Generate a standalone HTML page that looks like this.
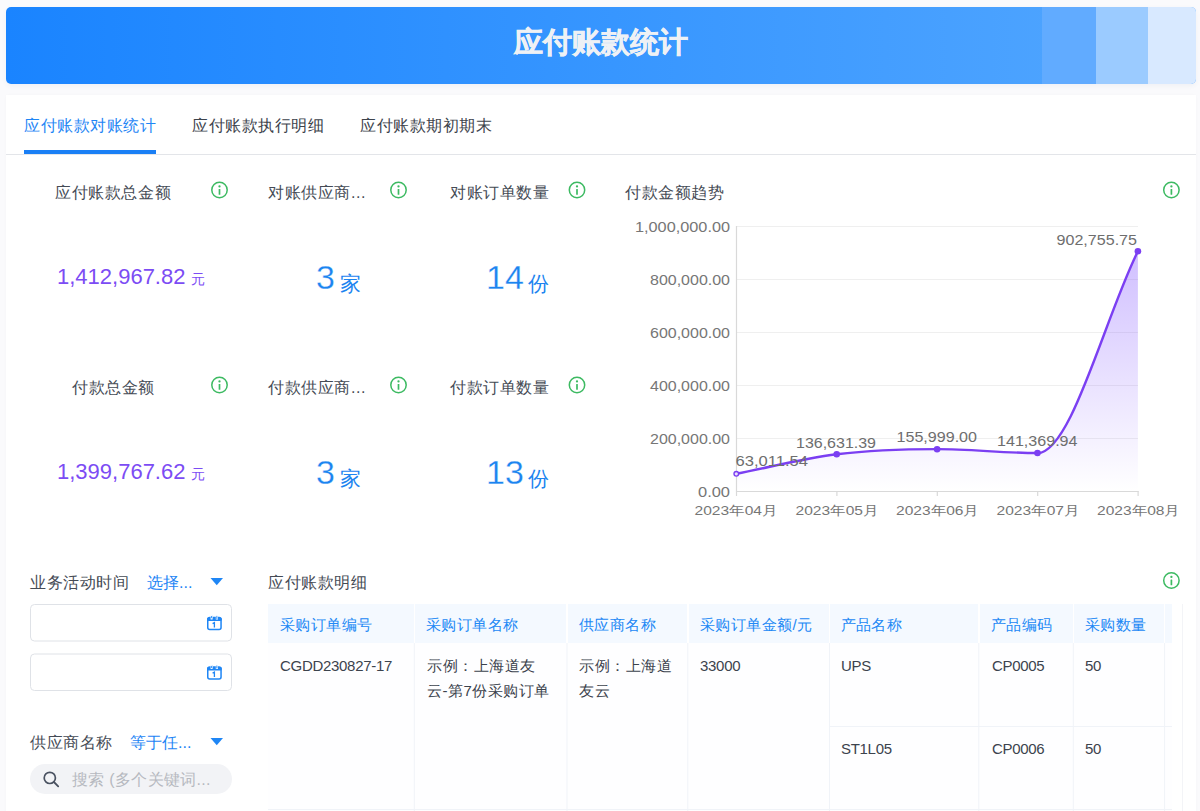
<!DOCTYPE html>
<html><head><meta charset="utf-8">
<style>
*{margin:0;padding:0;box-sizing:border-box}
html,body{width:1200px;height:811px;overflow:hidden;background:#fafafc;font-family:"Liberation Sans",sans-serif;}
.abs{position:absolute;white-space:nowrap}
#banner{position:absolute;left:6px;top:7px;width:1190px;height:76.5px;border-radius:5px;overflow:hidden;
 background:linear-gradient(90deg,#1a84ff 0%,#4ca3ff 88%);box-shadow:0 2px 5px rgba(60,80,120,0.06)}
#banner .b1{position:absolute;left:1036px;top:0;width:54px;height:100%;background:#61abff}
#banner .b2{position:absolute;left:1090px;top:0;width:52px;height:100%;background:#9bcbff}
#banner .b3{position:absolute;left:1142px;top:0;width:48px;height:100%;background:#d8e9ff}
#banner .t{position:absolute;left:0;width:1190px;top:16px;text-align:center;color:#eef1f5;font-size:29px;-webkit-text-stroke:0.5px #eef1f5;font-weight:bold;letter-spacing:0px}
#card{position:absolute;left:6px;top:95px;width:1190px;height:730px;background:#fff;box-shadow:0 0 3px rgba(0,0,0,0.025)}
.tab{position:absolute;top:116px;font-size:16px;letter-spacing:0.5px;color:#3d434c}
.lbl{font-size:16px;letter-spacing:0.6px;color:#454b55}
.info{position:absolute;width:17px;height:17px}
.pv{color:#7c4cf4}
.pn{}
.bv{color:#1c84f0}
.bn{-webkit-text-stroke:0.3px #fff}
.blue{color:#1f86f5}
.th{position:absolute;top:604.4px;height:38.2px;background:#f4f9ff}
.thx{position:absolute;top:616px;font-size:15px;letter-spacing:0.4px;color:#2288f5}
.td{position:absolute;font-size:15px;color:#3c434d;line-height:24px}
.tl{letter-spacing:-0.3px}
.tc{letter-spacing:0.5px;line-height:24.5px}
</style></head><body>
<div id="banner"><div class="b1"></div><div class="b2"></div><div class="b3"></div><div class="t">应付账款统计</div></div>
<div id="card"></div>
<!-- tabs -->
<div class="abs tab" style="left:24px;color:#1f86f5">应付账款对账统计</div>
<div class="abs tab" style="left:192px">应付账款执行明细</div>
<div class="abs tab" style="left:360px">应付账款期初期末</div>
<div class="abs" style="left:24px;top:150px;width:132px;height:3.5px;background:#1a7ff5"></div>
<div class="abs" style="left:6px;top:153.5px;width:1190px;height:1px;background:#e3e5e9"></div>

<!-- stats labels -->
<div class="abs lbl" style="left:55px;top:182.5px">应付账款总金额</div>
<div class="abs lbl" style="left:268px;top:182.5px">对账供应商...</div>
<div class="abs lbl" style="left:450px;top:182.5px">对账订单数量</div>
<div class="abs lbl" style="left:625px;top:182.5px">付款金额趋势</div>
<div class="abs lbl" style="left:72px;top:377.5px">付款总金额</div>
<div class="abs lbl" style="left:268px;top:377.5px">付款供应商...</div>
<div class="abs lbl" style="left:450px;top:377.5px">付款订单数量</div>

<svg class="abs" style="left:0;top:0" width="1200" height="811">
 <defs>
  <g id="ic"><circle cx="0" cy="0" r="7.7" fill="none" stroke="#3dba62" stroke-width="1.5"/><rect x="-0.85" y="-0.9" width="1.7" height="5.6" rx="0.5" fill="#3dba62"/><circle cx="0" cy="-3.6" r="1.15" fill="#3dba62"/></g>
 </defs>
 <use href="#ic" x="219.5" y="190"/>
 <use href="#ic" x="398.5" y="190"/>
 <use href="#ic" x="577" y="190"/>
 <use href="#ic" x="1171.4" y="190"/>
 <use href="#ic" x="219.5" y="385"/>
 <use href="#ic" x="398.5" y="385"/>
 <use href="#ic" x="577" y="385"/>
 <use href="#ic" x="1171.4" y="580.5"/>
</svg>

<!-- values -->
<div class="abs pv pn" style="left:57px;top:264px;font-size:22px">1,412,967.82</div><div class="abs pv" style="left:191px;top:271px;font-size:14px">元</div>
<div class="abs bv bn" style="left:316px;top:258px;font-size:34px">3</div><div class="abs bv" style="left:340px;top:270px;font-size:21px">家</div>
<div class="abs bv bn" style="left:486px;top:258px;font-size:34px">14</div><div class="abs bv" style="left:528px;top:270px;font-size:21px">份</div>
<div class="abs pv pn" style="left:57px;top:459px;font-size:22px">1,399,767.62</div><div class="abs pv" style="left:191px;top:466px;font-size:14px">元</div>
<div class="abs bv bn" style="left:316px;top:453px;font-size:34px">3</div><div class="abs bv" style="left:340px;top:465px;font-size:21px">家</div>
<div class="abs bv bn" style="left:486px;top:453px;font-size:34px">13</div><div class="abs bv" style="left:528px;top:465px;font-size:21px">份</div>

<!-- chart -->
<svg class="abs" style="left:0;top:0" width="1200" height="811" font-family="Liberation Sans, sans-serif">
 <defs>
  <linearGradient id="ag" x1="0" y1="0" x2="0" y2="1">
   <stop offset="0" stop-color="#7c4dff" stop-opacity="0.36"/>
   <stop offset="1" stop-color="#7c4dff" stop-opacity="0.0"/>
  </linearGradient>
 </defs>
 <g stroke="#efefef" stroke-width="1">
  <line x1="736" y1="226.5" x2="1138" y2="226.5"/>
  <line x1="736" y1="279.5" x2="1138" y2="279.5"/>
  <line x1="736" y1="332.5" x2="1138" y2="332.5"/>
  <line x1="736" y1="385.5" x2="1138" y2="385.5"/>
  <line x1="736" y1="438.5" x2="1138" y2="438.5"/>
 </g>
 <path d="M736.30,473.80 C769.77,467.30 803.23,458.40 836.70,454.29 C870.17,450.19 903.63,449.16 937.10,449.16 C970.57,449.16 1004.03,453.04 1037.50,453.04 C1070.97,453.04 1104.43,318.53 1137.90,251.27 L1137.9,491.3 L736.3,491.3 Z" fill="url(#ag)"/>
 <g stroke="#d9d9d9" stroke-width="1.2">
  <line x1="736.5" y1="226" x2="736.5" y2="491.5"/>
  <line x1="736" y1="491.5" x2="1138.5" y2="491.5"/>
  <line x1="736.5" y1="491" x2="736.5" y2="496"/>
  <line x1="836.9" y1="491" x2="836.9" y2="496"/>
  <line x1="937.3" y1="491" x2="937.3" y2="496"/>
  <line x1="1037.7" y1="491" x2="1037.7" y2="496"/>
  <line x1="1138.1" y1="491" x2="1138.1" y2="496"/>
 </g>
 <path d="M736.30,473.80 C769.77,467.30 803.23,458.40 836.70,454.29 C870.17,450.19 903.63,449.16 937.10,449.16 C970.57,449.16 1004.03,453.04 1037.50,453.04 C1070.97,453.04 1104.43,318.53 1137.90,251.27" fill="none" stroke="#7b3ff2" stroke-width="2.4"/>
 <g fill="#7b3ff2">
  <circle cx="836.7" cy="454.3" r="3.3"/>
  <circle cx="937.1" cy="449.2" r="3.3"/>
  <circle cx="1037.5" cy="453" r="3.3"/>
  <circle cx="1137.9" cy="251.3" r="3.3"/>
 </g>
 <circle cx="736.3" cy="473.8" r="2.3" fill="#e9defd" stroke="#7b3ff2" stroke-width="1.4"/>
 <g fill="#767676" font-size="14" text-anchor="end">
  <text x="730" y="231.5" textLength="95" lengthAdjust="spacingAndGlyphs">1,000,000.00</text>
  <text x="730" y="284.5" textLength="80" lengthAdjust="spacingAndGlyphs">800,000.00</text>
  <text x="730" y="337.5" textLength="80" lengthAdjust="spacingAndGlyphs">600,000.00</text>
  <text x="730" y="390.5" textLength="80" lengthAdjust="spacingAndGlyphs">400,000.00</text>
  <text x="730" y="443.5" textLength="80" lengthAdjust="spacingAndGlyphs">200,000.00</text>
  <text x="730" y="496.5" textLength="32" lengthAdjust="spacingAndGlyphs">0.00</text>
 </g>
 <g fill="#767676" font-size="13" text-anchor="middle">
  <text x="736" y="515" textLength="83" lengthAdjust="spacingAndGlyphs">2023年04月</text>
  <text x="837" y="515" textLength="83" lengthAdjust="spacingAndGlyphs">2023年05月</text>
  <text x="937.5" y="515" textLength="83" lengthAdjust="spacingAndGlyphs">2023年06月</text>
  <text x="1038" y="515" textLength="83" lengthAdjust="spacingAndGlyphs">2023年07月</text>
  <text x="1138.5" y="515" textLength="83" lengthAdjust="spacingAndGlyphs">2023年08月</text>
 </g>
 <g fill="#6e6e6e" font-size="14">
  <text x="735.5" y="466" textLength="72.5" lengthAdjust="spacingAndGlyphs">63,011.54</text>
  <text x="796" y="447.5" textLength="80" lengthAdjust="spacingAndGlyphs">136,631.39</text>
  <text x="896.5" y="442" textLength="80.5" lengthAdjust="spacingAndGlyphs">155,999.00</text>
  <text x="997" y="446" textLength="80.5" lengthAdjust="spacingAndGlyphs">141,369.94</text>
  <text x="1056.5" y="244.5" textLength="80.5" lengthAdjust="spacingAndGlyphs">902,755.75</text>
 </g>
</svg>

<!-- filters -->
<div class="abs lbl" style="left:30px;top:573px">业务活动时间</div>
<div class="abs blue" style="left:147px;top:573px;font-size:16px">选择...</div>
<div class="abs lbl" style="left:30px;top:733px">供应商名称</div>
<div class="abs blue" style="left:130px;top:733px;font-size:16px">等于任...</div>
<svg class="abs" style="left:0;top:0" width="260" height="811">
 <path d="M210.5,578 L223,578 L216.75,585.2 Z" fill="#1f86f5"/>
 <path d="M210.5,738 L223,738 L216.75,745.2 Z" fill="#1f86f5"/>
 <rect x="30.5" y="604.5" width="201" height="36.5" rx="4" fill="#fff" stroke="#dfe2e7"/>
 <rect x="30.5" y="654" width="201" height="36.5" rx="4" fill="#fff" stroke="#dfe2e7"/>
 <defs><g id="cal">
  <rect x="0.75" y="1.6" width="13.3" height="12" rx="2" fill="none" stroke="#1f86f5" stroke-width="1.5"/>
  <rect x="0" y="1.6" width="14.8" height="3.4" rx="1.5" fill="#1f86f5"/>
  <rect x="3.9" y="-0.4" width="1.6" height="3.6" fill="#1f86f5" stroke="#fff" stroke-width="0.6"/>
  <rect x="9.1" y="-0.4" width="1.6" height="3.6" fill="#1f86f5" stroke="#fff" stroke-width="0.6"/>
  <path d="M5.6,7.6 L7.4,6.6 L7.4,11.6" fill="none" stroke="#1f86f5" stroke-width="1.3"/>
 </g></defs>
 <use href="#cal" x="207" y="616"/>
 <use href="#cal" x="207" y="665.5"/>
 <rect x="30" y="764" width="202" height="30" rx="15" fill="#f2f3f6"/>
 <circle cx="49.8" cy="777.9" r="5.6" fill="none" stroke="#4a5261" stroke-width="1.7"/>
 <line x1="53.9" y1="782" x2="58.2" y2="786.3" stroke="#4a5261" stroke-width="1.8" stroke-linecap="round"/>
</svg>
<div class="abs" style="left:72px;top:770px;font-size:16px;letter-spacing:0.3px;color:#b6b9c0">搜索 (多个关键词...</div>

<!-- table -->
<div class="abs lbl" style="left:268px;top:573px">应付账款明细</div>
<div class="abs" style="left:268px;top:643px;width:904px;height:170px;background:#fefeff"></div>
<div class="th" style="left:268.00px;width:145.55px"></div>
<div class="th" style="left:415.05px;width:151.20px"></div>
<div class="th" style="left:567.75px;width:119.30px"></div>
<div class="th" style="left:688.55px;width:140.20px"></div>
<div class="th" style="left:830.25px;width:147.80px"></div>
<div class="th" style="left:979.55px;width:93.00px"></div>
<div class="th" style="left:1074.05px;width:89.80px"></div>
<div class="th" style="left:1165.35px;width:6.65px"></div>
<svg class="abs" style="left:0;top:0" width="1200" height="811">
 <g stroke="#f0f3f8" stroke-width="1">
  <line x1="414.3" y1="643" x2="414.3" y2="811"/>
  <line x1="567" y1="643" x2="567" y2="811"/>
  <line x1="687.8" y1="643" x2="687.8" y2="811"/>
  <line x1="829.5" y1="643" x2="829.5" y2="811"/>
  <line x1="978.8" y1="643" x2="978.8" y2="811"/>
  <line x1="1073.3" y1="643" x2="1073.3" y2="811"/>
  <line x1="1164.6" y1="643" x2="1164.6" y2="811"/>
  <line x1="830" y1="726.5" x2="1172" y2="726.5"/>
  <line x1="268" y1="809.5" x2="1172" y2="809.5"/>
 </g>
 <line x1="1182.5" y1="604" x2="1182.5" y2="811" stroke="#f3f4f7" stroke-width="1"/>
</svg>
<div class="thx" style="left:280px">采购订单编号</div>
<div class="thx" style="left:426px">采购订单名称</div>
<div class="thx" style="left:579px">供应商名称</div>
<div class="thx" style="left:700px">采购订单金额/元</div>
<div class="thx" style="left:840.5px">产品名称</div>
<div class="thx" style="left:991px">产品编码</div>
<div class="thx" style="left:1085px">采购数量</div>

<div class="td tl" style="left:280px;top:654px">CGDD230827-17</div>
<div class="td tc" style="left:427px;top:654px">示例：上海道友<br>云-第7份采购订单</div>
<div class="td tc" style="left:579px;top:654px">示例：上海道<br>友云</div>
<div class="td tl" style="left:700px;top:654px">33000</div>
<div class="td tl" style="left:841px;top:654px">UPS</div>
<div class="td tl" style="left:992px;top:654px">CP0005</div>
<div class="td tl" style="left:1085px;top:654px">50</div>
<div class="td tl" style="left:841px;top:737px">ST1L05</div>
<div class="td tl" style="left:992px;top:737px">CP0006</div>
<div class="td tl" style="left:1085px;top:737px">50</div>
</body></html>
